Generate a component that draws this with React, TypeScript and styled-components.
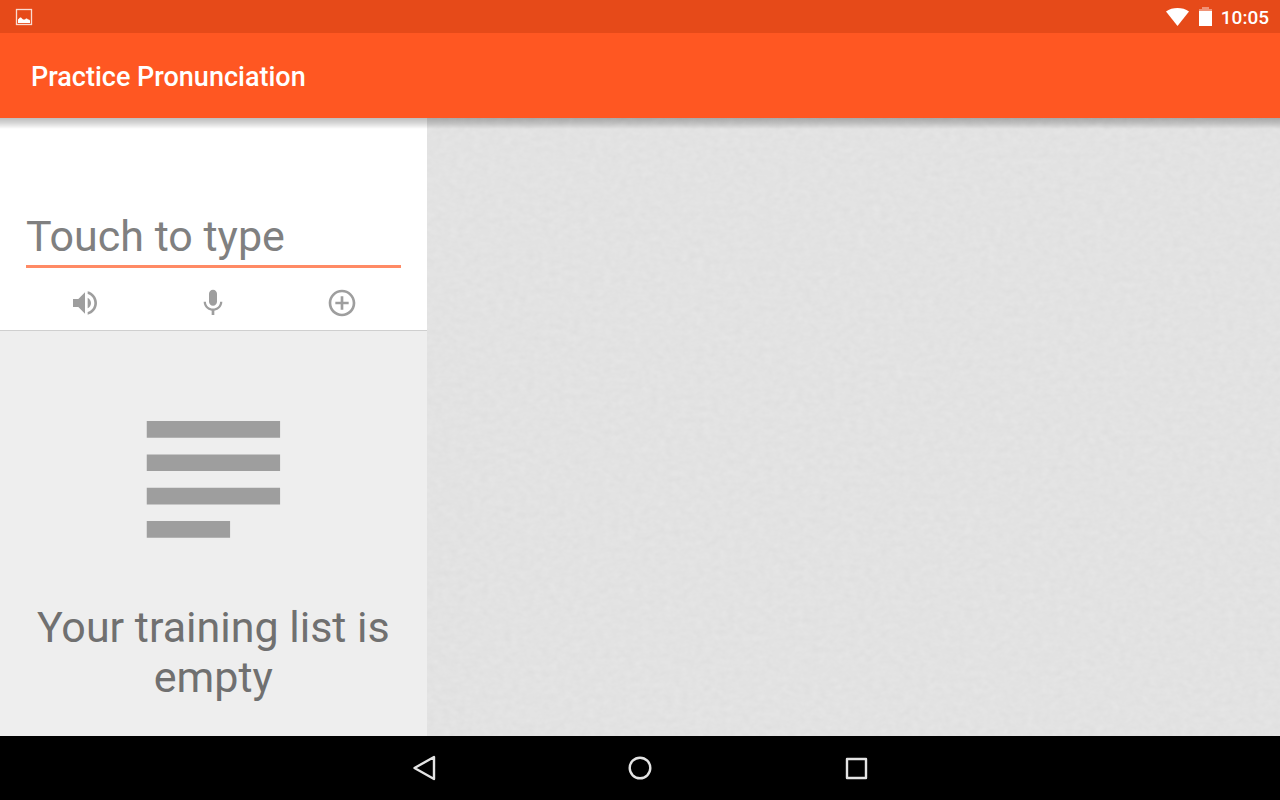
import React from "react";
import styled, { createGlobalStyle } from "styled-components";

const GlobalStyle = createGlobalStyle`
  *, *::before, *::after { box-sizing: border-box; }
  body {
    margin: 0;
    font-family: Roboto, "Liberation Sans", sans-serif;
    background: #e2e2e2;
  }
`;

const Screen = styled.div`
  min-height: 100vh;
  display: flex;
  flex-direction: column;
`;

const StatusBar = styled.div`
  height: 33px;
  padding: 0 11px 0 15px;
  display: flex;
  align-items: center;
  justify-content: space-between;
  background: #e64a19;
  color: #fff;
`;

const StatusGroup = styled.div`
  display: flex;
  align-items: center;
  gap: 8px;
`;

const Clock = styled.time`
  font-size: 19px;
  line-height: 24px;
  font-weight: 500;
  padding-top: 2px;
`;

const Icon = styled.svg`
  display: block;
  flex: none;
`;

const AppBar = styled.header`
  position: relative;
  z-index: 1;
  height: 85px;
  padding: 2px 31px 0;
  display: flex;
  align-items: center;
  background: #ff5722;

  &::after {
    content: "";
    position: absolute;
    top: 100%;
    left: 0;
    right: 0;
    height: 11px;
    pointer-events: none;
    background: linear-gradient(rgba(0, 0, 0, 0.26), rgba(0, 0, 0, 0.16) 45%, rgba(0, 0, 0, 0));
  }
`;

const Title = styled.h1`
  margin: 0;
  font-size: 27px;
  line-height: 32px;
  font-weight: 500;
  color: #fff;
`;

const Content = styled.main`
  flex: 1;
  display: grid;
  grid-template-columns: 1fr 2fr;
`;

const Sidebar = styled.section`
  display: flex;
  flex-direction: column;
  background: #eee;
`;

const Composer = styled.form`
  padding: 92px 0 11px;
  background: #fff;
  border-bottom: 1px solid #cfcfcf;
`;

const PhraseInput = styled.input`
  display: block;
  width: calc(100% - 52px);
  height: 58px;
  margin: 0 26px;
  padding: 0 0 4px;
  border: 0;
  border-bottom: 3px solid #ff8a65;
  border-radius: 0;
  outline: none;
  background: transparent;
  color: #212121;
  font-family: inherit;
  font-size: 43px;
  line-height: 50px;

  &::placeholder {
    color: #808080;
    opacity: 1;
  }
`;

const Actions = styled.div`
  display: grid;
  grid-template-columns: repeat(3, 1fr);
  justify-items: center;
  padding: 19px 21px 0;
`;

const IconButton = styled.button<{ $color: string }>`
  display: block;
  padding: 0;
  border: 0;
  background: none;
  color: ${(p) => p.$color};
  cursor: pointer;
`;

const EmptyState = styled.div`
  flex: 1;
  display: flex;
  flex-direction: column;
  align-items: center;
  gap: 23px;
  padding: 48px 26px 34px;
`;

const EmptyText = styled.p`
  margin: 0;
  text-align: center;
  font-size: 43px;
  line-height: 50px;
  color: #707070;
`;

const Detail = styled.section`
  position: relative;
  overflow: hidden;
  background: #e2e2e2;
`;

const Texture = styled.svg`
  position: absolute;
  inset: 0;
  width: 100%;
  height: 100%;
`;

const NavBar = styled.nav`
  height: 64px;
  display: flex;
  align-items: center;
  justify-content: center;
  gap: 184px;
  background: #000;
`;

const actions = [
  {
    label: "Listen",
    path: "M3 9v6h4l5 5V4L7 9H3zm13.500 3c0-1.770-1.020-3.290-2.500-4.030v8.050c1.480-.73 2.500-2.250 2.500-4.020zM14 3.230v2.060c2.890.86 5 3.540 5 6.710s-2.110 5.850-5 6.710v2.060c4.010-.91 7-4.490 7-8.770s-2.990-7.860-7-8.770z",
  },
  {
    label: "Speak",
    path: "M12 14c1.660 0 2.990-1.340 2.990-3L15 5c0-1.660-1.340-3-3-3S9 3.340 9 5v6c0 1.660 1.340 3 3 3zm5.300-3c0 3-2.540 5.100-5.300 5.100S6.700 14 6.700 11H5c0 3.410 2.720 6.230 6 6.720V21h2v-3.280c3.280-.48 6-3.300 6-6.720h-1.700z",
  },
  {
    label: "Add to training list",
    path: "M13 7h-2v4H7v2h4v4h2v-4h4v-2h-4V7zm-1-5C6.480 2 2 6.480 2 12s4.480 10 10 10 10-4.480 10-10S17.520 2 12 2zm0 18c-4.410 0-8-3.590-8-8s3.590-8 8-8 8 3.590 8 8-3.590 8-8 8z",
  },
];

export default function App() {
  return (
    <Screen>
      <GlobalStyle />
      <StatusBar>
        <Icon width="18" height="18" viewBox="0 0 18 18" aria-hidden="true">
          <rect x="1.500" y="1.500" width="15" height="15" fill="none" stroke="#fff" strokeOpacity="0.8" strokeWidth="1.300" />
          <path d="M3 15v-3.500l1-1 1-1h1l1 1 1 1h2l1-1h1l1 1h1l1 1V15z" fill="#fff" />
        </Icon>
        <StatusGroup>
          <Icon width="24" height="18" viewBox="0 0 24 18" aria-hidden="true">
            <path d="M0 3.500C3 1 7.500 0 11.500 0s8.500 1 11.500 3.500L11.500 18z" fill="#fff" />
          </Icon>
          <Icon width="15" height="20" viewBox="0 0 15 20" aria-hidden="true">
            <path d="M4 0h7v2h3v2H1V2h3z" fill="#fff" fillOpacity="0.4" />
            <path d="M1 4h13v15H1z" fill="#fff" />
          </Icon>
          <Clock>10:05</Clock>
        </StatusGroup>
      </StatusBar>

      <AppBar>
        <Title>Practice Pronunciation</Title>
      </AppBar>

      <Content>
        <Sidebar>
          <Composer onSubmit={(e) => e.preventDefault()}>
            <PhraseInput type="text" aria-label="Phrase" placeholder="Touch to type" />
            <Actions>
              {actions.map((a) => (
                <IconButton key={a.label} type="button" aria-label={a.label} $color="#9e9e9e">
                  <Icon width="32" height="32" viewBox="0 0 24 24" fill="currentColor" aria-hidden="true">
                    <path d={a.path} />
                  </Icon>
                </IconButton>
              ))}
            </Actions>
          </Composer>
          <EmptyState>
            <Icon width="200" height="200" viewBox="0 0 24 24" fill="#9e9e9e" aria-hidden="true">
              <path d="M14.050 17.050H4.050v2h10v-2zm6-8H4.050v2h16V9.050zM4.050 15.050h16v-2H4.050v2zM4.050 5.050v2h16v-2H4.050z" />
            </Icon>
            <EmptyText>Your training list is empty</EmptyText>
          </EmptyState>
        </Sidebar>
        <Detail aria-label="Pronunciation details">
          <Texture aria-hidden="true">
            <filter id="paper" x="0" y="0" width="100%" height="100%" colorInterpolationFilters="sRGB">
              <feTurbulence type="fractalNoise" baseFrequency="0.13 0.17" numOctaves="2" seed="4" />
              <feColorMatrix values="0.025 0.02 0 0 0.865  0.025 0.02 0 0 0.865  0.025 0.02 0 0 0.865  0 0 0 0 1" />
            </filter>
            <rect width="100%" height="100%" filter="url(#paper)" />
          </Texture>
        </Detail>
      </Content>

      <NavBar aria-label="System">
        <IconButton type="button" aria-label="Back" $color="#e4e4e4">
          <Icon width="32" height="32" viewBox="0 0 32 32" fill="none" stroke="currentColor" strokeWidth="2.400" strokeLinejoin="round" aria-hidden="true">
            <path d="M26 5v22L6.500 16z" />
          </Icon>
        </IconButton>
        <IconButton type="button" aria-label="Home" $color="#e4e4e4">
          <Icon width="32" height="32" viewBox="0 0 32 32" fill="none" stroke="currentColor" strokeWidth="2.400" aria-hidden="true">
            <circle cx="16" cy="16" r="10.300" />
          </Icon>
        </IconButton>
        <IconButton type="button" aria-label="Recent apps" $color="#e4e4e4">
          <Icon width="32" height="32" viewBox="0 0 32 32" fill="none" stroke="currentColor" strokeWidth="2.400" strokeLinejoin="round" aria-hidden="true">
            <rect x="7" y="7" width="19" height="19" />
          </Icon>
        </IconButton>
      </NavBar>
    </Screen>
  );
}
